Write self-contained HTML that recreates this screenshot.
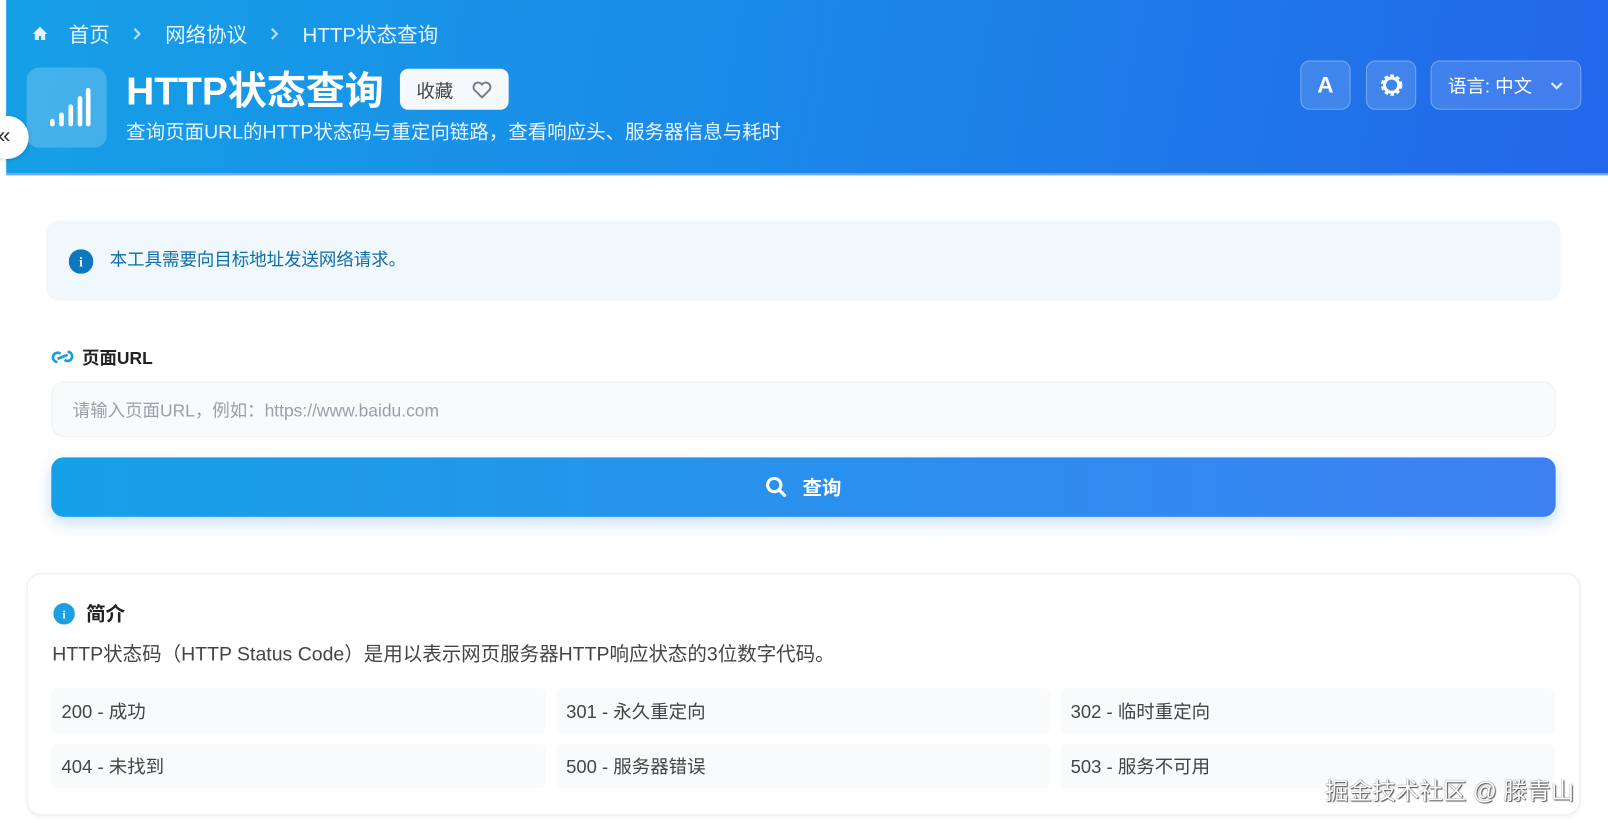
<!DOCTYPE html>
<html><head><meta charset="utf-8">
<style>
*{box-sizing:border-box;margin:0;padding:0}
body{width:1608px;height:823px;overflow:hidden;background:#fff;font-family:"Liberation Sans","Noto Sans CJK SC",sans-serif;position:relative}
#w{position:absolute;left:0;top:0;width:1568px;height:803px;transform:scale(1.0255);transform-origin:0 0}
.hdr{position:absolute;left:6px;top:0;width:1602px;height:171px;background:linear-gradient(100deg,#15a0e6 0%,#1a8ae8 45%,#2465ea 100%);border-bottom:2px solid #6aa6f4}
.bc{position:absolute;top:18px;left:25px;color:#e8f4ff;font-size:20px;display:flex;align-items:center}
.bc span{margin-right:22px}
.bc svg.sep{margin-right:22px}
.logo{position:absolute;left:20px;top:66px;width:78px;height:78px;border-radius:12px;background:rgba(255,255,255,.2)}
.title{position:absolute;left:117px;top:58px;color:#fff;font-size:38px;font-weight:bold}
.fav{position:absolute;left:384px;top:67px;width:106px;height:40px;background:#f5f8fc;border-radius:8px;color:#444;font-size:18px;padding:8px 0 0 16px}
.sub{position:absolute;left:117px;top:114px;color:#eaf4ff;font-size:19px}
.btn{position:absolute;top:59px;height:48px;border-radius:9px;background:rgba(255,255,255,.14);border:1px solid rgba(255,255,255,.3);color:#fff}
.coll{position:absolute;left:-14px;top:113px;width:42px;height:42px;border-radius:50%;background:#fff;box-shadow:0 1px 4px rgba(0,0,0,.2);font-size:22px;color:#333;padding:6px 0 0 12px}
.notice{position:absolute;left:45px;top:215px;width:1477px;height:78px;background:#f0f7fd;border-radius:12px;color:#0d6ea8;font-size:17px;padding:24px 0 0 62px}
.lbl{position:absolute;left:80px;top:335px;font-size:17px;font-weight:bold;color:#222}
.inp{position:absolute;left:50px;top:372px;width:1467px;height:54px;background:#f8fafc;border:1px solid #eef1f5;border-radius:12px;color:#9aa0a8;font-size:17px;padding:13px 0 0 20px}
.go{position:absolute;left:50px;top:446px;width:1467px;height:58px;border-radius:12px;background:linear-gradient(90deg,#16a1e7,#3d80f2);box-shadow:0 6px 14px rgba(40,120,230,.25);color:#fff;font-weight:bold;font-size:19px;text-align:center;padding-top:15px}
.card{position:absolute;left:26px;top:559px;width:1515px;height:236px;border:1px solid #eceef1;border-radius:14px;box-shadow:0 1px 4px rgba(0,0,0,.06)}
.ct{position:absolute;left:84px;top:584px;font-size:19px;font-weight:bold;color:#222}
.cp{position:absolute;left:51px;top:623px;font-size:19px;color:#444}
.it{position:absolute;width:482px;height:44px;background:#f8fafc;border-radius:6px;font-size:18px;color:#444;padding:9px 0 0 10px}
.wm{position:absolute;left:1292px;top:752px;font-size:23px;color:#fff;text-shadow:0 0 1px #333,1px 1px 1px #555}
</style></head><body><div id="w">
<div class="hdr">
 <div class="bc"><svg width="16" height="16" viewBox="0 0 16 16" style="margin-right:20px"><path d="M8 1L1 8h2v6h4v-4h2v4h4V8h2z" fill="#e8f4ff"/></svg><span>首页</span><svg class="sep" width="10" height="14" viewBox="0 0 10 14"><path d="M2 2l5 5-5 5" fill="none" stroke="#bfe0ff" stroke-width="2"/></svg><span>网络协议</span><svg class="sep" width="10" height="14" viewBox="0 0 10 14"><path d="M2 2l5 5-5 5" fill="none" stroke="#bfe0ff" stroke-width="2"/></svg><span>HTTP状态查询</span></div>
 <div class="logo"><svg width="78" height="78" viewBox="0 0 78 78"><g stroke="#fff" stroke-width="4.5" stroke-linecap="round"><line x1="25" y1="52" x2="25" y2="55"/><line x1="34" y1="46" x2="34" y2="55"/><line x1="43" y1="38" x2="43" y2="55"/><line x1="52" y1="30" x2="52" y2="55"/><line x1="60" y1="22" x2="60" y2="55"/></g></svg></div>
 <div class="title">HTTP状态查询</div>
 <div class="fav">收藏<svg width="20" height="18" viewBox="0 0 20 18" style="position:absolute;left:70px;top:12px"><path d="M10 16L2.5 8.5A4 4 0 0 1 10 3.5A4 4 0 0 1 17.5 8.5Z" fill="none" stroke="#777" stroke-width="1.8"/></svg></div>
 <div class="sub">查询页面URL的HTTP状态码与重定向链路，查看响应头、服务器信息与耗时</div>
 <div class="btn" style="left:1262px;width:49px;text-align:center;font-weight:bold;font-size:22px;padding-top:10px">A</div>
 <div class="btn" style="left:1326px;width:49px"><svg width="49" height="48" viewBox="0 0 49 48"><circle cx="24" cy="23" r="8" fill="none" stroke="#fff" stroke-width="5" stroke-dasharray="3 2.2"/><circle cx="24" cy="23" r="7" fill="none" stroke="#fff" stroke-width="3"/></svg></div>
 <div class="btn" style="left:1389px;width:147px;font-size:18px;padding:10px 0 0 16px">语言: 中文<svg width="14" height="10" viewBox="0 0 14 10" style="position:absolute;right:16px;top:19px"><path d="M2 2l5 5 5-5" fill="none" stroke="#dbe8ff" stroke-width="2.2"/></svg></div>
</div>
<div class="coll">«</div>
<div class="notice"><svg width="24" height="24" viewBox="0 0 24 24" style="position:absolute;left:22px;top:28px"><circle cx="12" cy="12" r="12" fill="#0d78bf"/><text x="12" y="17" font-size="13" font-weight="bold" fill="#fff" text-anchor="middle" font-family="Liberation Serif">i</text></svg>本工具需要向目标地址发送网络请求。</div>
<svg width="22" height="16" viewBox="0 0 22 16" style="position:absolute;left:50px;top:340px"><g fill="none" stroke="#1d9be0" stroke-width="2.6"><path d="M9 5 A4.5 4.5 0 1 0 6 13"/><path d="M13 11 A4.5 4.5 0 1 0 16 3"/><path d="M6 10 L16 6"/></g></svg>
<div class="lbl">页面URL</div>
<div class="inp">请输入页面URL，例如：https://www.baidu.com</div>
<div class="go"><svg width="22" height="22" viewBox="0 0 22 22" style="vertical-align:-4px;margin-right:14px"><circle cx="9" cy="9" r="6.5" fill="none" stroke="#fff" stroke-width="3"/><path d="M14 14l5 5" stroke="#fff" stroke-width="3.2" stroke-linecap="round"/></svg>查询</div>
<div class="card"></div>
<svg width="21" height="21" viewBox="0 0 21 21" style="position:absolute;left:52px;top:588px"><circle cx="10.5" cy="10.5" r="10.5" fill="#1ba1e2"/><text x="10.5" y="15" font-size="11" font-weight="bold" fill="#fff" text-anchor="middle" font-family="Liberation Serif">i</text></svg>
<div class="ct">简介</div>
<div class="cp">HTTP状态码（HTTP Status Code）是用以表示网页服务器HTTP响应状态的3位数字代码。</div>
<div class="it" style="left:50px;top:671px">200 - 成功</div>
<div class="it" style="left:542px;top:671px">301 - 永久重定向</div>
<div class="it" style="left:1034px;top:671px">302 - 临时重定向</div>
<div class="it" style="left:50px;top:725px">404 - 未找到</div>
<div class="it" style="left:542px;top:725px">500 - 服务器错误</div>
<div class="it" style="left:1034px;top:725px">503 - 服务不可用</div>
<div class="wm">掘金技术社区 @ 滕青山</div>
</div></body></html>
